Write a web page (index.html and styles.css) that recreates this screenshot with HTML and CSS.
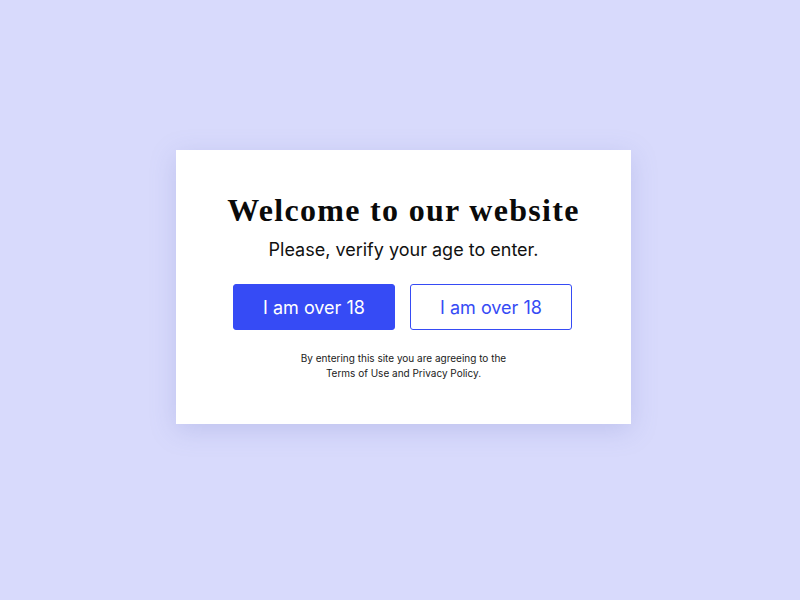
FILE: index.html
```html
<!DOCTYPE html>
<html lang="en">
<head>
<meta charset="utf-8">
<title>Age verification</title>
<link rel="stylesheet" href="styles.css">
</head>
<body>
  <div class="card">
    <h1 class="title">Welcome to our website</h1>
    <p class="subtitle">Please, verify your age to enter.</p>
    <div class="actions">
      <button class="btn btn-primary">I am over 18</button>
      <button class="btn btn-outline">I am over 18</button>
    </div>
    <p class="legal">By entering this site you are agreeing to the<br>Terms of Use and Privacy Policy.</p>
  </div>
</body>
</html>
```

FILE: styles.css
```css
html, body {
  margin: 0;
  padding: 0;
}
body {
  width: 800px;
  height: 600px;
  background: #d8dafc;
  font-family: Inter, "Noto Sans", sans-serif;
  overflow: hidden;
}
.card {
  box-sizing: border-box;
  width: 455px;
  height: 274px;
  margin: 150px 0 0 176px;
  background: #ffffff;
  box-shadow: 0 6px 24px rgba(120, 126, 200, 0.25);
  padding-top: 40px;
  display: flex;
  flex-direction: column;
  align-items: center;
}
.title {
  margin: 0;
  font-family: "Liberation Serif", "DejaVu Serif", serif;
  font-weight: 700;
  font-size: 32px;
  line-height: 40px;
  letter-spacing: 1.3px;
  color: #0a0a0a;
}
.subtitle {
  margin: 8px 0 0;
  font-size: 18px;
  line-height: 24px;
  color: #111111;
}
.actions {
  margin: 22px 2px 0 0;
  display: flex;
  gap: 15px;
}
.btn {
  box-sizing: border-box;
  width: 162px;
  height: 46px;
  border-radius: 3px;
  font-family: Inter, "Noto Sans", sans-serif;
  font-size: 18px;
  font-weight: 400;
  cursor: pointer;
}
.btn-primary {
  background: #364bf5;
  border: 1px solid #364bf5;
  color: #ffffff;
}
.btn-outline {
  background: #ffffff;
  border: 1px solid #364bf5;
  color: #364bf5;
}
.legal {
  margin: 21px 0 0;
  font-size: 10px;
  line-height: 15px;
  text-align: center;
  color: #1a1a1a;
}
```
